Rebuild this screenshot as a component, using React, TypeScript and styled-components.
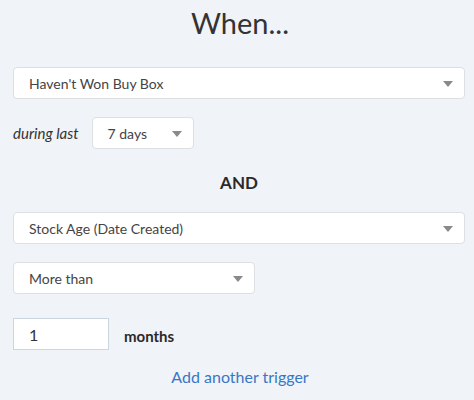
import React from 'react';
import styled, { createGlobalStyle } from 'styled-components';

const GlobalStyle = createGlobalStyle`
  body {
    margin: 0;
    background: #f0f3f7;
    font-family: Lato, "Liberation Sans", sans-serif;
    color: #333;
  }
`;

const Page = styled.div`
  width: 474px;
  height: 400px;
  box-sizing: border-box;
  padding: 6px 9px 0 13px;
  display: flex;
  flex-direction: column;
`;

const Title = styled.h1`
  margin: 0;
  text-align: center;
  font-size: 29px;
  font-weight: 400;
  line-height: 34px;
  color: #333;
  padding-left: 2px;
`;

const Select = styled.div<{ width?: number }>`
  box-sizing: border-box;
  width: ${(p) => (p.width ? `${p.width}px` : '100%')};
  height: 32px;
  background: #fff;
  border: 1px solid #dcdfe3;
  border-radius: 4px;
  display: flex;
  align-items: center;
  justify-content: space-between;
  padding: 0 11px 0 15px;
  font-size: 14px;
  color: #444;
`;

const Caret = styled.span`
  width: 0;
  height: 0;
  border-left: 5px solid transparent;
  border-right: 5px solid transparent;
  border-top: 6px solid #8a8a8a;
  margin-top: 2px;
`;

const Row = styled.div<{ top: number }>`
  display: flex;
  align-items: center;
  margin-top: ${(p) => p.top}px;
`;

const Label = styled.span`
  font-style: italic;
  font-size: 15px;
  color: #333;
  margin-right: 13px;
`;

const And = styled.div`
  margin-top: 23px;
  text-align: center;
  font-weight: 700;
  font-size: 17px;
  line-height: 22px;
  color: #2a2a2a;
`;

const NumberInput = styled.div`
  box-sizing: border-box;
  width: 96px;
  height: 32px;
  background: #fff;
  border: 1px solid #cdd6df;
  display: flex;
  align-items: center;
  padding-left: 15px;
  font-size: 16px;
  color: #333;
`;

const Unit = styled.span`
  margin-left: 15px;
  margin-top: 4px;
  font-weight: 700;
  font-size: 15px;
  color: #2a2a2a;
`;

const Link = styled.a`
  margin-top: 17px;
  text-align: center;
  font-size: 16px;
  color: #3877c6;
  text-decoration: none;
  padding-left: 2px;
`;

function Dropdown({ text, width }: { text: string; width?: number }) {
  return (
    <Select width={width}>
      <span>{text}</span>
      <Caret />
    </Select>
  );
}

export default function App() {
  return (
    <>
      <GlobalStyle />
      <Page>
        <Title>When...</Title>
        <Row top={27}>
          <Dropdown text="Haven't Won Buy Box" />
        </Row>
        <Row top={18}>
          <Label>during last</Label>
          <Dropdown text="7 days" width={102} />
        </Row>
        <And>AND</And>
        <Row top={18}>
          <Dropdown text="Stock Age (Date Created)" />
        </Row>
        <Row top={18}>
          <Dropdown text="More than" width={242} />
        </Row>
        <Row top={24}>
          <NumberInput>1</NumberInput>
          <Unit>months</Unit>
        </Row>
        <Link href="#">Add another trigger</Link>
      </Page>
    </>
  );
}
